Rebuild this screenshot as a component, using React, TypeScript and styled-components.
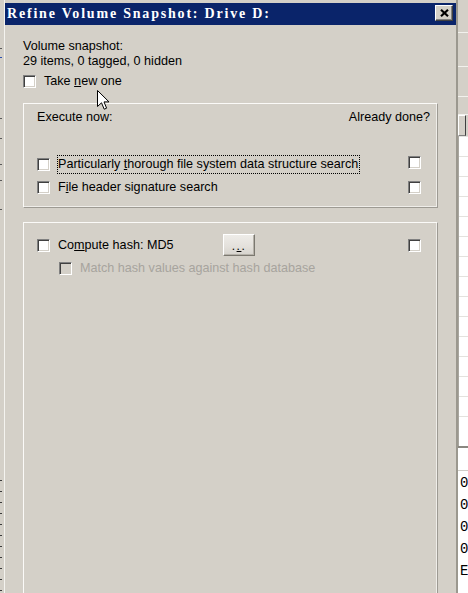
import React from "react";
import styled, { createGlobalStyle } from "styled-components";

const Global = createGlobalStyle`
  html, body { margin: 0; padding: 0; background: #d4d0c8; overflow: hidden; }
  #root { width: 468px; height: 593px; }
`;

const Screen = styled.div`
  position: relative;
  display: flex;
  width: 468px;
  height: 593px;
  overflow: hidden;
  background: #d4d0c8;
  font-family: "Liberation Sans", Arial, sans-serif;
  font-size: 12.6px;
  line-height: 15px;
  color: #000;
`;

const LeftStrip = styled.div`
  width: 4px;
  flex: none;
  background:
    repeating-linear-gradient(to bottom, transparent 0 10px, #3a3a3a 10px 11px) 0 470px / 2px 130px no-repeat,
    #d4d0c8;
  display: flex;
  flex-direction: column;
`;

const Tick = styled.div<{ $color: string; $gap: number }>`
  width: 2px;
  height: 1px;
  margin-top: ${(p) => p.$gap}px;
  background: ${(p) => p.$color};
`;

const Dialog = styled.div`
  width: 452px;
  height: 640px;
  flex: none;
  box-sizing: border-box;
  border-left: 1px solid #f4f3ef;
  background: #d4d0c8;
  display: flex;
  flex-direction: column;
  padding-top: 3px;
`;

const TitleBar = styled.div`
  height: 22px;
  flex: none;
  background: #0a246a;
  display: flex;
  align-items: center;
  justify-content: space-between;
  padding: 0 3px 0 2px;
`;

const TitleText = styled.span`
  color: #fff;
  font-family: "Liberation Serif", "Times New Roman", serif;
  font-weight: bold;
  font-size: 14px;
  letter-spacing: 1.8px;
  line-height: 22px;
  white-space: nowrap;
`;

const CloseButton = styled.div`
  width: 18px;
  height: 16px;
  box-sizing: border-box;
  background: #d4d0c8;
  border: 1px solid;
  border-color: #fff #404040 #404040 #fff;
  box-shadow: inset -1px -1px #808080, inset 1px 1px #d4d0c8;
  display: flex;
  align-items: center;
  justify-content: center;
  margin-top: -2px;
`;

const Body = styled.div`
  flex: 1;
  display: flex;
  flex-direction: column;
  padding: 14px 18px 0 18px;
`;

const InfoLine = styled.div`
  white-space: nowrap;
`;

const Row = styled.div<{ $h?: number; $mt?: number; $indent?: number }>`
  display: flex;
  align-items: center;
  height: ${(p) => p.$h ?? 15}px;
  margin-top: ${(p) => p.$mt ?? 0}px;
  padding-left: ${(p) => p.$indent ?? 0}px;
  white-space: nowrap;
`;

const Check = styled.span<{ $disabled?: boolean; $top?: number }>`
  width: 13px;
  height: 13px;
  flex: none;
  box-sizing: border-box;
  border: 1px solid;
  border-color: #808080 #fff #fff #808080;
  box-shadow: inset 1px 1px #404040, inset -1px -1px #d4d0c8;
  background: ${(p) => (p.$disabled ? "#d4d0c8" : "#fff")};
  ${(p) => (p.$top !== undefined ? `align-self: flex-start; margin-top: ${p.$top}px;` : "")}
`;

const Label = styled.span<{ $disabled?: boolean; $width?: number }>`
  margin-left: 8px;
  color: ${(p) => (p.$disabled ? "#a7a49e" : "#000")};
  ${(p) => (p.$width ? `width: ${p.$width}px; flex: none;` : "")}
`;

const FocusLabel = styled.span`
  margin-left: 7px;
  padding: 1px 1px 1px 0;
  border: 1px dotted #000;
`;

const Group = styled.div<{ $grow?: boolean }>`
  margin-top: 14px;
  box-sizing: border-box;
  border: 1px solid;
  border-color: #fbfaf8 #9d9a93 #9d9a93 #fbfaf8;
  box-shadow: inset -1px -1px #efede9;
  display: flex;
  flex-direction: column;
  ${(p) => (p.$grow ? "flex: 1;" : "")}
`;

const GroupHeader = styled.div`
  display: flex;
  justify-content: space-between;
  padding: 6px 7px 0 13px;
  margin-bottom: 30px;
`;

const GroupRow = styled.div<{ $h: number; $mt?: number }>`
  display: flex;
  align-items: center;
  justify-content: space-between;
  height: ${(p) => p.$h}px;
  margin-top: ${(p) => p.$mt ?? 0}px;
  padding: 0 16px 0 13px;
  white-space: nowrap;
`;

const RowStart = styled.div`
  display: flex;
  align-items: center;
  height: 100%;
`;

const GroupBody = styled.div<{ $pt: number; $pb: number }>`
  padding-top: ${(p) => p.$pt}px;
  padding-bottom: ${(p) => p.$pb}px;
  display: flex;
  flex-direction: column;
`;

const SmallButton = styled.div`
  width: 32px;
  height: 22px;
  box-sizing: border-box;
  border: 1px solid;
  border-color: #fff #7b7870 #7b7870 #fff;
  box-shadow: inset -1px -1px #b6b2aa;
  background: linear-gradient(to bottom, #eeece8 0%, #e4e1dc 55%, #d6d3cd 100%);
  display: flex;
  align-items: flex-end;
  justify-content: center;
  padding-bottom: 3px;
  font-size: 12px;
  line-height: 12px;
  letter-spacing: 1.5px;
`;

const RightStrip = styled.div`
  flex: 1;
  box-sizing: border-box;
  border-left: 2px solid;
  border-image: linear-gradient(to right, #9b988f 50%, #6d6a64 50%) 1;
  display: flex;
  flex-direction: column;
  background: #d4d0c8;
`;

const Band = styled.div<{ $h: number }>`
  height: ${(p) => p.$h}px;
  flex: none;
  border-bottom: 1px solid #f2f1ed;
`;

const ColHeader = styled.div`
  height: 21px;
  flex: none;
  width: 8px;
  box-sizing: border-box;
  border: 1px solid;
  border-color: #fff #404040 #808080 #fff;
  background: #d4d0c8;
`;

const ListArea = styled.div`
  flex: none;
  height: 310px;
  background: #fff;
  border-left: 1px solid #a9a69f;
  display: flex;
  flex-direction: column;
`;

const ListRow = styled.div`
  height: 19px;
  flex: none;
  border-top: 1px solid #e3e2de;
`;

const Divider = styled.div`
  height: 2px;
  flex: none;
  background: #8a8780;
`;

const HexArea = styled.div`
  flex: 1;
  background: #fff;
  display: flex;
  flex-direction: column;
  padding-top: 22px;
`;

const HexSep = styled.div`
  height: 1px;
  background: #cfcdc8;
  margin-bottom: 1px;
`;

const HexRow = styled.div`
  height: 22px;
  line-height: 22px;
  padding-left: 2px;
  font-family: "Liberation Mono", "Courier New", monospace;
  font-size: 14px;
  color: #000;
  overflow: hidden;
  white-space: nowrap;
`;

const Cursor = styled.svg`
  position: absolute;
  left: 97px;
  top: 90px;
  pointer-events: none;
`;

export default function App() {
  const listRows = Array.from({ length: 15 }, (_, i) => i);
  const hex = ["0", "0", "0", "0", "E"];
  return (
    <>
      <Global />
      <Screen>
        <LeftStrip>
          <Tick $color="#5a5a5a" $gap={48} />
          <Tick $color="#2a4fb0" $gap={8} />
          <Tick $color="#5a5a5a" $gap={60} />
          <Tick $color="#5a5a5a" $gap={19} />
          <Tick $color="#5a5a5a" $gap={25} />
          <Tick $color="#5a5a5a" $gap={15} />
          <Tick $color="#5a5a5a" $gap={28} />
        </LeftStrip>
        <Dialog>
          <TitleBar>
            <TitleText>Refine Volume Snapshot: Drive D:</TitleText>
            <CloseButton>
              <svg width="9" height="8" viewBox="0 0 9 8">
                <path d="M1 0.8 L8 7.2 M8 0.8 L1 7.2" stroke="#000" strokeWidth="2.2" />
              </svg>
            </CloseButton>
          </TitleBar>
          <Body>
            <InfoLine>Volume snapshot:</InfoLine>
            <InfoLine>29 items, 0 tagged, 0 hidden</InfoLine>
            <Row $mt={5}>
              <Check />
              <Label>
                Take <u>n</u>ew one
              </Label>
            </Row>
            <Group>
              <GroupHeader>
                <span>Execute now:</span>
                <span>Already done?</span>
              </GroupHeader>
              <GroupRow $h={19}>
                <RowStart>
                  <Check />
                  <FocusLabel>
                    Particularly <u>t</u>horough file system data structure search
                  </FocusLabel>
                </RowStart>
                <Check $top={1} />
              </GroupRow>
              <GroupRow $h={19} $mt={4}>
                <RowStart>
                  <Check />
                  <Label>
                    F<u>i</u>le header signature search
                  </Label>
                </RowStart>
                <Check />
              </GroupRow>
              <GroupBody $pt={0} $pb={10} />
            </Group>
            <Group $grow>
              <GroupBody $pt={11} $pb={0}>
                <GroupRow $h={22}>
                  <RowStart>
                    <Check />
                    <Label $width={165}>
                      Co<u>m</u>pute hash: MD5
                    </Label>
                    <SmallButton>
                      .<u>.</u>.
                    </SmallButton>
                  </RowStart>
                  <Check />
                </GroupRow>
                <Row $mt={5} $indent={35}>
                  <Check $disabled />
                  <Label $disabled>Match hash values against hash database</Label>
                </Row>
              </GroupBody>
            </Group>
          </Body>
        </Dialog>
        <RightStrip>
          <Band $h={32} />
          <Band $h={33} />
          <Band $h={29} />
          <Band $h={17} />
          <ColHeader />
          <ListArea>
            {listRows.map((i) => (
              <ListRow key={i} />
            ))}
          </ListArea>
          <Divider />
          <HexArea>
            <HexSep />
            {hex.map((h, i) => (
              <HexRow key={i}>{h}</HexRow>
            ))}
          </HexArea>
        </RightStrip>
        <Cursor width="13" height="21" viewBox="0 0 13 21">
          <path
            d="M0.5 0.5 L0.5 16.5 L4.5 12.8 L7.2 19.2 L9.6 18.2 L7 11.9 L12 11.9 Z"
            fill="#fff"
            stroke="#000"
            strokeWidth="1"
            strokeLinejoin="miter"
          />
        </Cursor>
      </Screen>
    </>
  );
}
